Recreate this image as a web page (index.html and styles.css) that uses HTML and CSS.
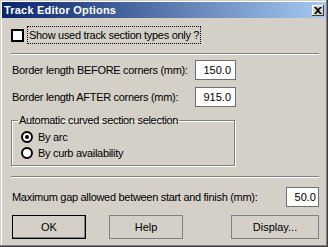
FILE: index.html
```html
<!DOCTYPE html>
<html lang="en">
<head>
    <meta charset="UTF-8">
    <title>Track Editor Options</title>
    <link rel="stylesheet" href="styles.css">
</head>
<body>
    <div class="dialog">
        <div class="titlebar">
            <span class="title">Track Editor Options</span>
            <span class="close">
                <svg width="8" height="7" viewBox="0 0 8 7"><path d="M0 0h2l2 2 2-2h2L5 3.5 8 7H6L4 5 2 7H0l3-3.5z" fill="#000"/></svg>
            </span>
        </div>
        <div class="content">
            <div class="check-row">
                <span class="checkbox"></span>
                <span class="focus">Show used track section types only ?</span>
            </div>

            <div class="sep first"></div>

            <div class="fields">
                <label>Border length BEFORE corners (mm):</label>
                <span class="input">150.0</span>
                <label>Border length AFTER corners (mm):</label>
                <span class="input">915.0</span>
            </div>

            <fieldset class="group">
                <legend>Automatic curved section selection</legend>
                <div class="radio-row"><span class="radio checked"></span>By arc</div>
                <div class="radio-row"><span class="radio"></span>By curb availability</div>
            </fieldset>

            <div class="sep second"></div>

            <div class="gap-row">
                <label>Maximum gap allowed between start and finish (mm):</label>
                <span class="input small">50.0</span>
            </div>

            <div class="buttons">
                <button class="btn default">OK</button>
                <button class="btn">Help</button>
                <button class="btn wide">Display...</button>
            </div>
        </div>
    </div>
</body>
</html>
```

FILE: styles.css
```css
body {
    margin: 0;
    font-family: "Liberation Sans", Arial, sans-serif;
    font-size: 11px;
    letter-spacing: -0.3px;
    color: #000;
}
.dialog {
    width: 328px;
    height: 247px;
    box-sizing: border-box;
    padding: 2px;
    background: #d4d0c8;
    box-shadow: inset -1px -1px #404040, inset -2px -2px #808080, inset 1px 1px #d4d0c8, inset 2px 2px #fff;
}
.titlebar {
    height: 16px;
    display: flex;
    align-items: center;
    justify-content: space-between;
    padding: 0 2px 0 2px;
    background: linear-gradient(to right, #0a246a, #a6caf0);
}
.title {
    color: #fff;
    font-weight: bold;
    font-size: 11px;
    letter-spacing: 0.2px;
}
.close {
    width: 12px;
    height: 11px;
    display: flex;
    align-items: center;
    justify-content: center;
    background: #d4d0c8;
    box-shadow: inset -1px -1px #404040, inset 1px 1px #fff;
}
.content {
    padding: 0 7px 0 9px;
}
.check-row {
    display: flex;
    align-items: center;
    margin-top: 9px;
    height: 16px;
}
.checkbox {
    width: 9px;
    height: 9px;
    border: 2px solid #000;
    background: #fff;
}
.focus {
    margin-left: 4px;
    padding: 1px 1px;
    outline: 1px dotted #000;
    line-height: 14px;
    white-space: nowrap;
}
.sep {
    height: 0;
    border-top: 1px solid #808080;
    border-bottom: 1px solid #fff;
}
.sep.first {
    margin-top: 10px;
}
.sep.second {
    margin-top: 10px;
}
.fields {
    display: grid;
    grid-template-columns: 184px 41px;
    row-gap: 7px;
    align-items: center;
    margin-top: 5px;
}
label {
    padding-left: 1px;
    white-space: nowrap;
}
.input {
    box-sizing: border-box;
    height: 20px;
    line-height: 18px;
    padding-right: 4px;
    text-align: right;
    background: #fff;
    border: 1px solid #6f6f6f;
    letter-spacing: 0;
}
.group {
    width: 224px;
    box-sizing: border-box;
    margin: 7px 0 0 0;
    padding: 3px 0 4px 9px;
    border: 1px solid #808080;
    box-shadow: 1px 1px 0 #fff, inset 1px 1px 0 #fff;
}
.group legend {
    padding: 0 1px;
    margin-left: -3px;
    line-height: 12px;
}
.radio-row {
    display: flex;
    align-items: center;
    height: 16px;
}
.radio {
    box-sizing: border-box;
    width: 12px;
    height: 12px;
    border: 2px solid #000;
    border-radius: 50%;
    background: #fff;
    margin-right: 5px;
    display: flex;
    align-items: center;
    justify-content: center;
}
.radio.checked::after {
    content: "";
    width: 4px;
    height: 4px;
    border-radius: 50%;
    background: #000;
}
.gap-row {
    display: flex;
    justify-content: space-between;
    align-items: center;
    margin-top: 9px;
}
.input.small {
    width: 33px;
    padding-right: 2px;
}
.buttons {
    display: flex;
    margin-top: 8px;
}
.btn {
    font-family: "Liberation Sans", Arial, sans-serif;
    font-size: 11px;
    width: 74px;
    height: 24px;
    padding: 0;
    margin-right: 23px;
    background: #d4d0c8;
    border: 1px solid #808080;
}
.btn.default {
    border-color: #000;
    box-shadow: inset -1px -1px #808080;
    margin-left: 1px;
}
.btn.wide {
    width: 88px;
    margin-left: auto;
    margin-right: 0;
}
```
